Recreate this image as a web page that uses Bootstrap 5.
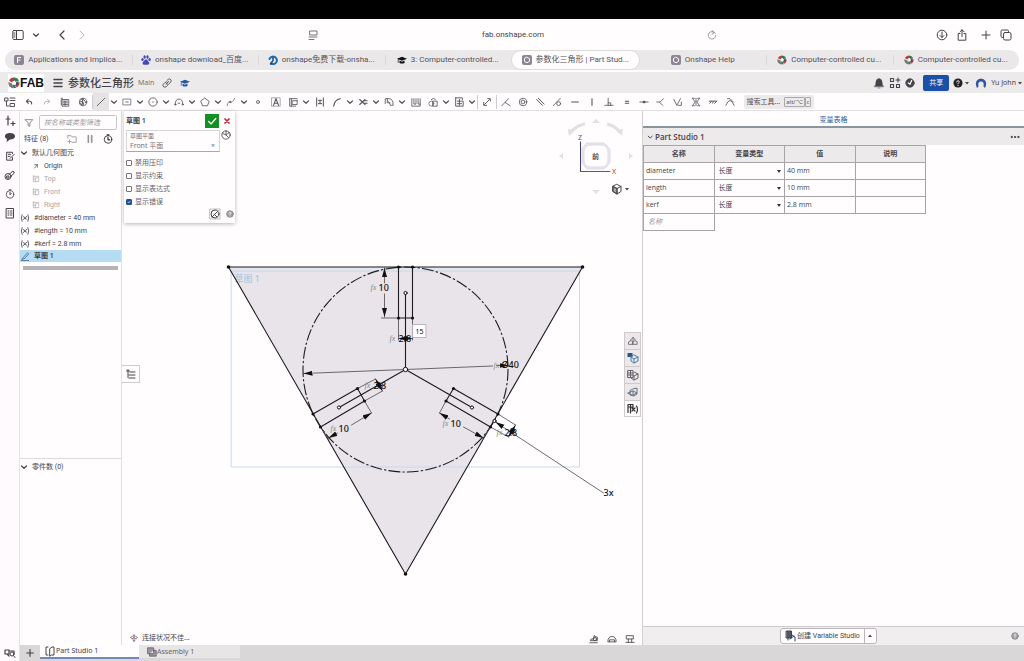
<!DOCTYPE html>
<html lang="zh-CN">
<head>
<meta charset="utf-8">
<meta name="viewport" content="width=device-width, initial-scale=1">
<title>参数化三角形 | Part Studio 1</title>
<link href="https://cdn.jsdelivr.net/npm/bootstrap@5.3.0/dist/css/bootstrap.min.css" rel="stylesheet">
<style>
:root{--ink:#454249;--chrome:#edeaec}
body{font-family:"Noto Sans","Noto Sans CJK SC",sans-serif;font-size:7px;line-height:10px;color:var(--ink);background:#fffdfe;min-height:100vh}
button{background:none;border:0;padding:0;color:inherit;line-height:inherit}
svg{display:block;fill:none;stroke:currentColor;stroke-linecap:round;stroke-linejoin:round;flex:none}
.ic{width:12px;height:12px}
.ic-s{width:10px;height:10px}
.ic-xs{width:8px;height:8px}
a{color:inherit;text-decoration:none}
.safari{font-family:Roboto,"Noto Sans CJK SC",sans-serif;font-size:8px;line-height:12px}
.topstrip{height:19px;background:#000}
.addressbar{height:31px}
.tabstrip{height:20px;background:#ebe8ea;border-radius:10px;margin:0 5px 2px}
.tabstrip a{flex:1 1 0;min-width:0;height:20px;color:#55525a}
.tabstrip a+a::before{content:"";position:absolute;left:0;top:5px;height:10px;border-left:1px solid #dad6d9}
.tabstrip a.current{background:#fffdfe;border-radius:10px;border:1px solid #dcd9db}
.tabstrip a.current::before,.tabstrip a.current+a::before{display:none}
.fav{width:10px;height:10px}
.docbar{height:21px;background:var(--chrome)}
.logo-box{background:#fff;height:18px;font:bold 12px/18px "Liberation Sans",sans-serif;color:#111}
.doc-title{font-size:11px;line-height:16px;font-weight:500}
.share{width:26px;height:16px;background:#1b50a8;color:#fff;border-radius:2px}
.tools{height:18px;border-bottom:1px solid #e3dfe2;color:#55525a}
.tools button{width:18px;height:17px;display:flex;align-items:center;justify-content:center}
.tools .first{width:20px}
.tools .wd{width:16px}
.tools .ch{width:10px}
.tools .on{background:#e6e3e5}
.vr-s{width:1px;height:14px;background:#cfcbce}
.relations{width:242px}
.relations button{width:17px}
.tools .search{width:70px;height:14px;background:#edeaec;border-radius:2px;margin-left:5px}
kbd.key{font:6px/8px "Noto Sans",sans-serif;color:#555;background:none;border:1px solid #aaa;padding:0 1px;border-radius:1px}
.rail{width:20px;background:#fffafd;border-right:1px solid #e6e3e5}
.features{width:102px;border-right:1px solid #e3e0e2;font-family:Roboto,"Noto Sans CJK SC",sans-serif}
.features .find{width:78px;height:15px;border:1px solid #c8c4c7;border-radius:2px;font-style:italic;font-size:7px;padding:0 4px;background:#fffdfe}
.find::placeholder,.newname::placeholder{color:#97939a;opacity:1}
.tree{padding-top:2px}
.node{height:13px}
.node.soft{color:#aaa6ab}
.node.sel{background:#b5dcf3;height:12px}
.rollbar{height:4px;background:#b6b2b5;margin:4px 3px 0}
.parts{border-top:1px solid #dedadd;height:187px}
.parts span{line-height:8px}
.sheet{min-width:0}
.dialog-box{left:2px;top:0;width:111px;height:112px;background:#fffdfe;box-shadow:0 1px 4px #b8b4b7;padding-left:2px}
.dialog-head{height:19px}
.okbtn{width:14px;height:14px;background:#139022!important;color:#fff}
.pick{border:1px solid #d8d4d7;border-bottom-color:#aaa6a9;height:22px;width:94px;padding-left:3px;color:#77737a}
.pick small{font-size:6px;display:block}
.tick{width:6px;height:6px;margin:0;border:1px solid #77737a;border-radius:1px;appearance:none}
.tick:checked{background:#1d4fa3 url("data:image/svg+xml,%3Csvg xmlns='http://www.w3.org/2000/svg' viewBox='0 0 6 6'%3E%3Cpath d='M1 3l1.5 1.5L5 1.5' stroke='white' fill='none'/%3E%3C/svg%3E");border-color:#1d4fa3}
.opts label{color:#66626a}
.opts>div{height:13px}
.opts{gap:0}
.gap-3px{gap:3px}
.listtab{left:0;top:254px;width:18px;height:18px;border:1px solid #cfccce;border-left:0;background:#fffdfe}
.cube{right:8px;top:6px;width:80px;height:82px}
.cubemenu{right:11px;top:72px}
.sidebtns{right:1px;top:221px;width:17px;border:1px solid #cfc9cc;color:#66626c}
.sidebtns button{height:17px;background:#ece8ea;border-bottom:1px solid #cfc9cc}
.sidebtns button:last-child{background:#fffdfe;border-bottom:0;height:15px;color:#333}
.status{left:8px;bottom:2px}
.measure{right:7px;bottom:1px}
.vars{width:382px;border-left:1px solid #d2ced1}
.vars-title{height:17px;border-bottom:2px solid #89979c;color:#2f5c99;padding-top:2px}
.vars-head{height:17px;background:var(--chrome);font-family:"Open Sans","Noto Sans CJK SC",sans-serif;font-size:8px;font-weight:600}
.vtable{width:283px;table-layout:fixed;border-collapse:collapse;font:7px/10px "Open Sans","Noto Sans CJK SC",sans-serif}
.vtable th,.vtable td{border:1px solid #a9a3a8;height:17px;padding:0 2px}
.vtable th{background:var(--chrome);text-align:center;font-weight:600}
.vtable select{appearance:none;border:0;width:100%;padding:0 2px;color:inherit;background:url("data:image/svg+xml,%3Csvg xmlns='http://www.w3.org/2000/svg' viewBox='0 0 4 3'%3E%3Cpath d='M0 0h4L2 3z' fill='%23333'/%3E%3C/svg%3E") right 1px center/4px 3px no-repeat}
.newname{width:100%;border:0;padding:0 2px;font-style:italic;background:none}
.vtable .blank{border:0}
.vars-foot{height:19px;background:#f0eeef;border-top:1px solid #cfcbce}
.vsbtn{height:16px;border:1px solid #b9b5b8;border-radius:3px;background:#fffdfe;font-family:Roboto,"Noto Sans CJK SC",sans-serif;font-weight:500}
.vsbtn button+button{width:12px;height:14px;border-left:1px solid #b9b5b8}
.bottom{height:16px;background:#dad7d9}
.bottom .plus{width:20px}
.bottom a{width:101px;height:13px}
.bottom a.current{background:#fffdfe;border-bottom:2px solid #7089b8;width:99px;height:14px}
.bottom a.idle{background:#e8e5e7;color:#66626a}
.center-bar{width:410px}
.geo text{font-family:"Noto Sans","Noto Sans CJK SC",sans-serif;stroke:none;fill:#111}
.geo .num{font-size:9px;font-weight:500}
.geo .fx{font-family:"Liberation Serif",serif;font-style:italic;font-size:8px;fill:#888}
</style>
</head>
<body class="d-flex flex-column">
<svg width="0" height="0" class="position-absolute" aria-hidden="true">
<defs>
<symbol id="chev" viewBox="0 0 8 8"><path d="M1.500 3 4 5.300 6.500 3" stroke-width="1.200"/></symbol>
<symbol id="caret" viewBox="0 0 8 8"><path d="M2 3h4L4 5.500z" fill="currentColor" stroke="none"/></symbol>
<symbol id="undo" viewBox="0 0 12 12"><path d="M5 2 2 5l3 3M2.500 5H7q3 0 3 4" stroke-width="1.600"/></symbol>
<symbol id="fablogo" viewBox="0 0 12 12"><g stroke="none"><path d="M6 .500a5.500 5.500 0 0 1 5 3L7.500 5 6 4z" fill="#2b7d55"/><path d="M1 3.500a5.500 5.500 0 0 1 5-3V4L4 5.500z" fill="#c53a35"/><path d="M.500 5 4 6.500 5.500 11.500A5.500 5.500 0 0 1 .500 5z" fill="#777"/><path d="M11.500 5a5.500 5.500 0 0 1-3 5.500L7 8z" fill="#c53a35"/><path d="M4.500 8 7 7.500 8 11H5.500z" fill="#2b7d55"/><path d="M4.500 4.500 7 3.500 8 6.500 6 8z" fill="#fff"/><path d="M8 5.500 10.500 4v3L8 8.500z" fill="#3c4a80"/></g></symbol>
<symbol id="cap" viewBox="0 0 12 12"><path d="M0 4.500 6 2l6 2.500L6 7z" fill="currentColor" stroke="none"/><path d="M3 6.500v3q3 1.500 6 0v-3L6 8z" fill="currentColor" stroke="none"/><path d="M1.500 5v4" stroke-width=".8"/></symbol>
<symbol id="osicon" viewBox="0 0 10 10"><rect width="10" height="10" rx="2" fill="#8b8595" stroke="none"/><path d="M5 2.300 7.500 3.700v2.700L5 7.800 2.500 6.400V3.700z" stroke="#fff"/></symbol>
<symbol id="plane" viewBox="0 0 12 12"><path d="M2 1v9h3M2 2h8v8H5V4h3M2 6h3"/></symbol>
<symbol id="q" viewBox="0 0 12 12"><circle cx="6" cy="6" r="4" fill="#a29ea4" stroke="#8a868c"/><path d="M4.800 5c0-1.700 2.500-1.700 2.500 0 0 .8-1.300.8-1.300 1.700M6 8.300v.1" stroke="#fff"/></symbol>
<symbol id="cub" viewBox="0 0 12 12"><path d="M6 1.500 10 3.500v5L6 11 2 8.500v-5zM2 3.500l4 2 4-2M6 5.500V11"/></symbol>
<symbol id="fvar" viewBox="0 0 12 12"><path d="M2.500 2Q.5 6 2.500 10M9.500 2Q11.500 6 9.500 10M4.200 4.200c1.500-1 2 4.500 3.600 3.400M8 4C6.500 4 5.500 8 4 7.800" stroke-width="1"/></symbol>
</defs>
</svg>

<div class="topstrip"></div>
<div class="safari">
  <div class="addressbar d-flex align-items-center justify-content-between px-2">
    <div class="d-flex align-items-center ps-1">
      <button aria-label="侧边栏"><svg class="ic" viewBox="0 0 12 12"><rect x=".8" y="1.500" width="10.400" height="9" rx="1"/><path d="M4.500 1.500v9M2 4h1M2 6h1M2 8h1"/></svg></button>
      <button class="ms-1 ps-1" aria-label="标签组"><svg class="ic-xs" viewBox="0 0 8 8"><use href="#chev"/></svg></button>
      <button class="ms-3" aria-label="后退"><svg class="ic" viewBox="0 0 12 12"><path d="M8 2 4 6 8 10" stroke-width="1.200"/></svg></button>
      <button class="ms-2" aria-label="前进" style="color:#bbb"><svg class="ic" viewBox="0 0 12 12"><path d="M4 2 8 6 4 10"/></svg></button>
    </div>
    <div class="center-bar d-flex align-items-center justify-content-between">
      <button aria-label="阅读器"><svg class="ic" viewBox="0 0 12 12" style="color:#777"><rect x="3" y="2" width="7" height="4"/><path d="M2 8h8M2 10.500h5"/></svg></button>
      <span>fab.onshape.com</span>
      <button aria-label="重新载入"><svg class="ic-s" viewBox="0 0 12 12" style="color:#888"><path d="M9.800 4A4.500 4.500 0 1 0 10.500 6.500M6 .500l3 2.500-3 2"/></svg></button>
    </div>
    <div class="d-flex align-items-center gap-2 pe-1">
      <button aria-label="下载"><svg class="ic" viewBox="0 0 12 12"><circle cx="6" cy="6" r="4.800"/><path d="M6 3v5.500M4 6.500l2 2 2-2"/></svg></button>
      <button aria-label="共享页面"><svg class="ic" viewBox="0 0 12 12"><path d="M4 4.500H2.200v6.700h7.600V4.500H8M6 7.500V.800M4 2.800l2-2 2 2"/></svg></button>
      <button class="ps-1" aria-label="新标签页"><svg class="ic" viewBox="0 0 12 12"><path d="M6 2v8M2 6h8"/></svg></button>
      <button aria-label="标签页概览"><svg class="ic" viewBox="0 0 12 12"><rect x="3.500" y="3.500" width="7.500" height="7.500" rx="1.500"/><path d="M3.500 8.500H2.200Q1 8.500 1 7.200v-5Q1 1 2.200 1h5Q8.500 1 8.500 2.200v1.300"/></svg></button>
    </div>
  </div>
  <nav class="tabstrip d-flex" aria-label="标签页">
    <a href="#" class="d-flex align-items-center justify-content-center gap-1 position-relative text-nowrap"><svg class="fav" viewBox="0 0 10 10"><rect width="10" height="10" rx="2" fill="#8b8595" stroke="none"/><path d="M3.500 7.500v-5h3M3.500 5h2.500" stroke="#fff"/></svg>Applications and Implica...</a>
    <a href="#" class="d-flex align-items-center justify-content-center gap-1 position-relative text-nowrap"><svg class="fav" viewBox="0 0 10 10"><g fill="#4448b8" stroke="none"><ellipse cx="1.500" cy="4.500" rx="1.200" ry="1.600"/><ellipse cx="3.600" cy="2" rx="1.200" ry="1.700"/><ellipse cx="6.500" cy="2" rx="1.200" ry="1.700"/><ellipse cx="8.600" cy="4.500" rx="1.200" ry="1.600"/><path d="M5 4.200Q6.300 4.200 7 6l1.500 2q-.5 2-2 1.700h-3q-1.500.3-2-1.500Q1.500 7 3 6q1-1.800 2-1.800"/></g></svg>onshape download_百度...</a>
    <a href="#" class="d-flex align-items-center justify-content-center gap-1 position-relative text-nowrap"><svg class="fav" viewBox="0 0 10 10"><path d="M3 8.500A3.800 3.800 0 1 0 1.500 4" stroke="#1769b5" stroke-width="2"/><path d="M5 2.500v3L2.500 9" stroke="#164a80" stroke-width="1.500"/></svg>onshape免费下载-onsha...</a>
    <a href="#" class="d-flex align-items-center justify-content-center gap-1 position-relative text-nowrap"><svg class="fav" viewBox="0 0 12 12" style="color:#111"><use href="#cap"/></svg>3: Computer-controlled...</a>
    <a href="#" class="current d-flex align-items-center justify-content-center gap-1 position-relative text-nowrap" aria-current="page"><svg class="fav" viewBox="0 0 10 10"><use href="#osicon"/></svg>参数化三角形 | Part Stud...</a>
    <a href="#" class="d-flex align-items-center justify-content-center gap-1 position-relative text-nowrap"><svg class="fav" viewBox="0 0 10 10"><use href="#osicon"/></svg>Onshape Help</a>
    <a href="#" class="d-flex align-items-center justify-content-center gap-1 position-relative text-nowrap"><svg class="fav" viewBox="0 0 12 12"><use href="#fablogo"/></svg>Computer-controlled cu...</a>
    <a href="#" class="d-flex align-items-center justify-content-center gap-1 position-relative text-nowrap"><svg class="fav" viewBox="0 0 12 12"><use href="#fablogo"/></svg>Computer-controlled cu...</a>
  </nav>
</div>

<header class="docbar d-flex align-items-center justify-content-between">
  <div class="d-flex align-items-center">
    <div class="logo-box d-flex align-items-center ms-2"><svg class="ic" viewBox="0 0 12 12"><use href="#fablogo"/></svg>FAB</div>
    <button class="ms-2" aria-label="菜单"><svg class="ic" viewBox="0 0 12 12"><path d="M2 2.500h8M2 6h8M2 9.500h8" stroke-width="1.500"/></svg></button>
    <span class="doc-title ms-1">参数化三角形</span>
    <span class="ms-1 text-secondary">Main</span>
    <button class="ms-2" aria-label="链接"><svg class="ic-s" viewBox="0 0 12 12"><path d="M5 7.500 8 4M6 3l1.500-1.500Q9.500.500 10.500 2t0 3L8 7.500Q6.500 8 5.500 7M6.500 5Q5 4 3.500 5.500l-2 2Q.500 9.500 2 10.500t3 0L6.500 9"/></svg></button>
    <button class="ms-1 ps-1" aria-label="教育版" style="color:#26569f"><svg class="ic-s" viewBox="0 0 12 12"><use href="#cap"/></svg></button>
  </div>
  <div class="d-flex align-items-center">
    <button aria-label="通知" class="me-1"><svg class="ic" viewBox="0 0 12 12"><path d="M1.500 9.500Q3 8 3 5q0-3 3-3.500Q9 2 9 5q0 3 1.500 4.500zM5 11h2" fill="currentColor" stroke-width=".5"/></svg></button>
    <button aria-label="应用" class="me-1"><svg class="ic" viewBox="0 0 12 12"><path d="M1.500 1.500h3v3h-3zM1.500 7.500h3v3h-3zM7.500 7.500h3v3h-3zM9 1v4M7 3h4" stroke-width="1.100"/></svg></button>
    <button aria-label="学习中心" class="me-1 pe-1"><svg class="ic-s" viewBox="0 0 12 12"><circle cx="6" cy="6" r="5" fill="currentColor"/><path d="M4 6 6 7.500 8 3" stroke="#fff" stroke-width="1.500"/></svg></button>
    <button class="share me-1">共享</button>
    <button class="d-flex align-items-center me-1 ms-0" aria-label="帮助"><svg class="ic-s" viewBox="0 0 12 12" style="color:#222"><circle cx="6" cy="6" r="5.500" fill="currentColor" stroke="none"/><path d="M4.500 4.700c0-2 3-2 3 0 0 1-1.500 1-1.500 2.300M6 9v.1" stroke="#fff" stroke-width="1.200"/></svg><svg class="ic-xs" viewBox="0 0 8 8"><use href="#caret"/></svg></button>
    <button class="d-flex align-items-center"><svg class="ic" viewBox="0 0 12 12"><path d="M2 11Q0 7 1.500 4 3 1.500 6 1.500T10.500 4Q12 7 10 11L8.500 9.500Q9.500 4.500 6 4.500T3.500 9.500z" fill="#2f56a5" stroke="none"/></svg><span class="ms-1">Yu John</span><svg class="ic-xs" viewBox="0 0 8 8"><use href="#caret"/></svg></button>
  </div>
</header>

<div class="tools d-flex align-items-center" role="toolbar" aria-label="草图工具">
  <button class="first" aria-label="特征列表"><svg class="ic" viewBox="0 0 12 12"><path d="M1 2h3v3H1zM2.500 5v5H5M6 2h5M6 4.500h5M6.500 7.500h4v3h-4z"/></svg></button>
  <button aria-label="撤消"><svg class="ic-xs" viewBox="0 0 12 12"><use href="#undo"/></svg></button>
  <button style="color:#aaa" aria-label="重做"><svg class="ic-xs" viewBox="0 0 12 12"><path d="m7 2 3 3-3 3M9.500 5H5Q2 5 2 9" stroke-width="1.300"/></svg></button>
  <button aria-label="复制"><svg class="ic-s" viewBox="0 0 12 12"><path d="M3 1.500H1.500v8M3 3h7.500v8H3zM4 5h5M4 7h5M4 9h5M6 5v5"/></svg></button>
  <button aria-label="更新"><svg class="ic-s" viewBox="0 0 12 12"><circle cx="6" cy="6" r="4.500"/><path d="M4 2.500Q9 3 9 7M3 5q4 0 4 4M2 7q2 0 2 2M6 1.500 5 10" stroke-width="1.200"/></svg></button>
  <span class="vr-s"></span>
  <button class="wd on" aria-label="直线"><svg class="ic-s" viewBox="0 0 12 12"><path d="M1.500 10.500 10.500 1.500"/></svg></button><button class="ch" aria-label="更多直线"><svg class="ic-xs"><use href="#chev"/></svg></button>
  <button class="wd" aria-label="矩形"><svg class="ic-s" viewBox="0 0 12 12"><rect x="1.500" y="2.500" width="9" height="7" stroke="#65718b"/><path d="M4.500 6h3"/></svg></button><button class="ch" aria-label="更多矩形"><svg class="ic-xs"><use href="#chev"/></svg></button>
  <button class="wd" aria-label="圆"><svg class="ic-s" viewBox="0 0 12 12"><circle cx="6" cy="6" r="5"/><path d="M5.500 6h1"/></svg></button><button class="ch" aria-label="更多圆"><svg class="ic-xs"><use href="#chev"/></svg></button>
  <button class="wd" aria-label="圆弧"><svg class="ic-s" viewBox="0 0 12 12"><path d="M1.500 8.500q0-6 4.500-6t4.500 6M5 7.500h2"/><circle cx="1.500" cy="9" r=".8"/><circle cx="10.500" cy="9" r=".8"/></svg></button><button class="ch" aria-label="更多圆弧"><svg class="ic-xs"><use href="#chev"/></svg></button>
  <button class="wd" aria-label="多边形"><svg class="ic-s" viewBox="0 0 12 12"><path d="m6 1.500 5 3.700-2 5.300H3L1 5.200z"/></svg></button><button class="ch" aria-label="更多多边形"><svg class="ic-xs"><use href="#chev"/></svg></button>
  <button class="wd" aria-label="样条"><svg class="ic-s" viewBox="0 0 12 12"><path d="M1.500 10.500Q2 4.500 5 6t5.500-4.500" stroke="#778"/><circle cx="5" cy="6" r=".8"/></svg></button><button class="ch" aria-label="更多样条"><svg class="ic-xs"><use href="#chev"/></svg></button>
  <button aria-label="点"><svg class="ic-s" viewBox="0 0 12 12"><circle cx="6" cy="6" r="1.800"/></svg></button>
  <button aria-label="文字"><svg class="ic-s" viewBox="0 0 12 12"><path d="M1 1h10v10H1z" stroke-width=".6"/><path d="m3 10 3-8 3 8M4 7.500h4" stroke-width="1.300"/></svg></button>
  <button class="wd" aria-label="转换"><svg class="ic-s" viewBox="0 0 12 12"><path d="M2 2h9M2 2v9h7M11 4v5H5V4.500h6M4 2v9"/></svg></button><button class="ch" aria-label="更多转换"><svg class="ic-xs"><use href="#chev"/></svg></button>
  <button aria-label="构造"><svg class="ic-s" viewBox="0 0 12 12"><path d="M2 1v10M10 1v10M4 4h4M4 8h4M6 4v4" stroke-width="1.200"/></svg></button>
  <button class="wd" aria-label="圆角"><svg class="ic-s" viewBox="0 0 12 12"><path d="M2 11Q3 3 10 2" stroke-width="1.300"/></svg></button><button class="ch" aria-label="更多圆角"><svg class="ic-xs"><use href="#chev"/></svg></button>
  <button class="wd" aria-label="修剪"><svg class="ic-s" viewBox="0 0 12 12"><path d="M2 3 8.500 9M8.500 3 2 9M8 4.500h3M8 7.500h3" stroke-width="1.300"/></svg></button><button class="ch" aria-label="更多修剪"><svg class="ic-xs"><use href="#chev"/></svg></button>
  <button class="wd" aria-label="偏移"><svg class="ic-s" viewBox="0 0 12 12"><path d="M1.500 8V2H6q5 0 5 8H7.500Q7.500 6 4.500 5M4 2v5h3"/></svg></button><button class="ch" aria-label="更多偏移"><svg class="ic-xs"><use href="#chev"/></svg></button>
  <button aria-label="阵列"><svg class="ic-s" viewBox="0 0 12 12"><path d="M1 2v9h10V2M3.500 2v6.500H6V2M8.500 2v6.500H11"/></svg></button>
  <button class="wd" aria-label="变换"><svg class="ic-s" viewBox="0 0 12 12"><circle cx="4" cy="8" r="3" stroke="#64718b"/><path d="M6 5h5v6H6zM4 3q3-3 5 0"/></svg></button><button class="ch" aria-label="更多变换"><svg class="ic-xs"><use href="#chev"/></svg></button>
  <button class="wd" aria-label="插入"><svg class="ic-s" viewBox="0 0 12 12"><path d="M2 1h8v2M2 1v10h9V5H4M4 8h5M6.500 3v7" stroke-width="1.100"/></svg></button><button class="ch" aria-label="更多插入"><svg class="ic-xs"><use href="#chev"/></svg></button>
  <span class="vr-s"></span>
  <button aria-label="尺寸"><svg class="ic-s" viewBox="0 0 12 12"><path d="M3 9 9 3M2 6.500V10h3.500M7 2h3v3" stroke-width="1.100"/></svg></button>
  <span class="vr-s"></span>
  <div class="relations d-flex justify-content-between">
    <button aria-label="重合"><svg class="ic-s" viewBox="0 0 12 12"><path d="M1 10.500 9 2M5 6.500l6 4"/></svg></button>
    <button aria-label="同心"><svg class="ic-s" viewBox="0 0 12 12" stroke="#476898"><circle cx="6" cy="6" r="4.500"/><circle cx="6" cy="6" r="2.300"/></svg></button>
    <button aria-label="平行"><svg class="ic-s" viewBox="0 0 12 12"><path d="m2 3 7 7M4 1.500l7 7" stroke-width="1.200"/></svg></button>
    <button aria-label="相切"><svg class="ic-s" viewBox="0 0 12 12"><path d="M1.500 10.500 10 1.500"/><circle cx="8" cy="8" r="2.300"/></svg></button>
    <button aria-label="水平"><svg class="ic-s" viewBox="0 0 12 12"><path d="M2 6h8" stroke-width="1.300"/></svg></button>
    <button aria-label="竖直"><svg class="ic-s" viewBox="0 0 12 12"><path d="M6 2v8" stroke-width="1.300"/></svg></button>
    <button aria-label="垂直"><svg class="ic-s" viewBox="0 0 12 12"><path d="M5 1.500V10M1 10h10M5 7h3v3"/></svg></button>
    <button aria-label="相等"><svg class="ic-s" viewBox="0 0 12 12"><path d="M4 5h4M4 7.500h4" stroke-width="1.300"/></svg></button>
    <button aria-label="中点"><svg class="ic-s" viewBox="0 0 12 12"><path d="M1 6h10"/><circle cx="6" cy="6" r="1.200" fill="currentColor"/></svg></button>
    <button aria-label="法向"><svg class="ic-s" viewBox="0 0 12 12"><path d="M9 2 4.500 6.500 8 10M1 6h3.500"/></svg></button>
    <button aria-label="穿透"><svg class="ic-s" viewBox="0 0 12 12"><path d="m1 3 3.500 7L9 2M6 10h4V6"/></svg></button>
    <button aria-label="对称"><svg class="ic-s" viewBox="0 0 12 12"><path d="M1.500 1.500H4M8 1.500h2.500M1.500 10.500H4M8 10.500h2.500M6 1.500v9M2 2l3 4-3 4M10 2 7 6l3 4"/></svg></button>
    <button aria-label="固定"><svg class="ic-s" viewBox="0 0 12 12"><path d="M1.500 5h9M2 7.500 4 5.500M5 7.500l2-2M8 7.500l2-2" stroke-width="1.200"/></svg></button>
    <button aria-label="曲率"><svg class="ic-s" viewBox="0 0 12 12"><path d="M1 10q5-12 10 0M3 2h3l4 4"/></svg></button>
  </div>
  <button class="search text-nowrap">搜索工具... <kbd class="key ms-1">alt/⌥</kbd><kbd class="key">c</kbd></button>
</div>

<main class="d-flex flex-grow-1">
  <nav class="rail d-flex flex-column align-items-center" aria-label="侧栏">
    <button class="my-1" aria-label="添加"><svg class="ic" viewBox="0 0 12 12"><path d="M4 1v9M2 4h4M7 8.500h4M9 6.500v4" stroke-width="1.200"/></svg></button>
    <button class="mb-2" aria-label="评论"><svg class="ic" viewBox="0 0 12 12"><path d="M6 2c7 0 6.500 6.500 0 6.500L2.500 11 3 8C-1 6 1 2 6 2" fill="currentColor" stroke="none"/></svg></button>
    <button class="mb-2" aria-label="笔记"><svg class="ic-s" viewBox="0 0 12 12"><path d="M9 8v3H2V1.500h7V3M4 4h3M4 6.500h2M6 9l5-5" stroke-width="1.200"/></svg></button>
    <button class="mb-2" aria-label="外观"><svg class="ic" viewBox="0 0 12 12"><circle cx="4" cy="7.500" r="3"/><path d="M5 5.500 9 2l1.500 2L7 7M3 7h2v2H3z"/></svg></button>
    <button class="mb-2" aria-label="历史记录"><svg class="ic-s" viewBox="0 0 12 12"><circle cx="6" cy="6.500" r="4.500"/><path d="M6 4v3l1.500-1.500M5 1h2" stroke-width="1.200"/></svg></button>
    <button aria-label="列表"><svg class="ic" viewBox="0 0 12 12"><path d="M2.500 1.500h7v9.500h-7zM4 4h1M4 6h1M4 8h1M6.500 4H8M6.500 6H8M6.500 8H8" stroke-width="1"/></svg></button>
  </nav>
  <aside class="features d-flex flex-column justify-content-between">
    <div>
      <div class="d-flex align-items-center justify-content-between ps-1 pe-1 pt-1">
        <svg class="ic-s" viewBox="0 0 12 12"><path d="M1.500 2h9L7 6v4L5 9V6z" stroke="#777"/></svg>
        <input class="find" aria-label="筛选特征" placeholder="按名称或类型筛选">
      </div>
      <div class="d-flex align-items-center justify-content-between pt-1 pe-2">
        <span class="text-nowrap ps-1">特征 (8)</span>
        <div class="d-flex gap-1" style="color:#99959a">
          <button aria-label="新文件夹"><svg class="ic-s" viewBox="0 0 12 12"><path d="M1 2h4l1 1.500h5V10H6M1 2v3M1 9h4M3 7v4"/></svg></button>
          <button class="ms-1" aria-label="暂停"><svg class="ic-s" viewBox="0 0 12 12"><path d="M4 2v8M8 2v8" stroke-width="2"/></svg></button>
          <button class="ms-1" aria-label="计时"><svg class="ic-s" viewBox="0 0 12 12" style="color:#222"><circle cx="6" cy="6.500" r="4.500"/><path d="M6 4v3h2M5 1h2" stroke-width="1.300"/></svg></button>
        </div>
      </div>
      <div class="tree">
        <div class="node d-flex align-items-center"><svg class="ic-xs me-1"><use href="#chev"/></svg>默认几何图元</div>
        <div class="ms-2 ps-1">
          <div class="node d-flex align-items-center gap-1"><svg class="ic-xs" viewBox="0 0 12 12"><path d="M4 4h4v4M8 4 4 9"/></svg>Origin</div>
          <div class="node soft d-flex align-items-center gap-1"><svg class="ic-xs"><use href="#plane"/></svg>Top</div>
          <div class="node soft d-flex align-items-center gap-1"><svg class="ic-xs"><use href="#plane"/></svg>Front</div>
          <div class="node soft d-flex align-items-center gap-1"><svg class="ic-xs"><use href="#plane"/></svg>Right</div>
        </div>
        <div class="node d-flex align-items-center"><svg class="ic-s me-1" viewBox="0 0 12 12"><use href="#fvar"/></svg>#diameter = 40 mm</div>
        <div class="node d-flex align-items-center"><svg class="ic-s me-1" viewBox="0 0 12 12"><use href="#fvar"/></svg>#length = 10 mm</div>
        <div class="node d-flex align-items-center"><svg class="ic-s me-1" viewBox="0 0 12 12"><use href="#fvar"/></svg>#kerf = 2.8 mm</div>
        <div class="node sel d-flex align-items-center fw-semibold"><svg class="ic-s me-1" viewBox="0 0 12 12" style="color:#456a96"><path d="M3 9 9 2l1.500 1.500L5 9.500 2.500 10zM1.500 11.500h9"/></svg>草图 1</div>
      </div>
      <div class="rollbar"></div>
    </div>
    <div class="parts d-flex align-items-start pt-1"><svg class="ic-xs me-1"><use href="#chev"/></svg><span>零件数 (0)</span></div>
  </aside>

  <section class="sheet position-relative flex-grow-1">
    <svg class="geo position-absolute w-100 h-100" viewBox="122 111 519 534" preserveAspectRatio="xMidYMid meet" role="img" aria-label="三角形草图">
      <defs>
        <marker id="ar" viewBox="0 0 9 6" refX="9" refY="3" markerWidth="9" markerHeight="6" markerUnits="userSpaceOnUse" orient="auto-start-reverse"><path d="M0 .500 9 3 0 5.500z" fill="#111" stroke="none"/></marker>
      </defs>
      <path d="M228 267H582L405 574z" fill="#e8e4e9" stroke="none"/>
      <rect x="231" y="271" width="348" height="196" stroke="#c3dcec"/>
      <text x="234" y="282" font-size="9" style="fill:#9fc4e0">草图 1</text>
      <g stroke="#1c1a1f" stroke-width="1.100">
        <path d="M228 267H582L405 574z"/>
        <circle cx="405" cy="369.500" r="102.500" stroke-dasharray="11 3 1.500 3"/>
        <path d="M398 267V318H412V267M405 293V369.500"/>
        <path d="M312.500 414 357 388.500 364 401 320 427M338.500 407.500 405 369.500"/>
        <path d="M497.500 414 453 388.500 445.500 401 490 427M471.500 407.500 405 369.500"/>
      </g>
      <g stroke="#4a474c" stroke-width=".8">
        <path d="M398 318V340M412 318V340M381 318H398M357 388.500 375 379M364 401 382 391M364 401 371 413M320 427 328 439M445.500 401 439 413M490 427 482 439M497.500 414 515 425M490 427 508 437"/>
        <path d="M384 283V268" marker-end="url(#ar)"/><path d="M384 294V317" marker-end="url(#ar)"/>
        <path d="M405 369.500 303 373.500" marker-end="url(#ar)"/><path d="M405 369.500 492 366"/><path d="M496 365.500H508" marker-end="url(#ar)"/>
        <path d="M351 425 371 413" marker-end="url(#ar)"/><path d="M337 433 328 438" marker-end="url(#ar)"/>
        <path d="M449 419 439 413" marker-end="url(#ar)"/><path d="M463 427 483 438" marker-end="url(#ar)"/>
        <path d="M603 493 495 422" marker-end="url(#ar)"/>
        <path d="M398 338.500H412" marker-start="url(#ar)" marker-end="url(#ar)"/>
        <path d="M375 379 382 391" marker-start="url(#ar)" marker-end="url(#ar)"/>
        <path d="M515 425 508 437" marker-start="url(#ar)" marker-end="url(#ar)"/>
      </g>
      <g fill="#111" stroke="none"><circle cx="228" cy="267" r="1.800"/><circle cx="582" cy="267" r="1.800"/><circle cx="405" cy="574" r="1.800"/><circle cx="398" cy="267" r="1.600"/><circle cx="412" cy="267" r="1.600"/><circle cx="398" cy="318" r="1.600"/><circle cx="412" cy="318" r="1.600"/><circle cx="312.500" cy="414" r="1.600"/><circle cx="357" cy="388.500" r="1.600"/><circle cx="364" cy="401" r="1.600"/><circle cx="320" cy="427" r="1.600"/><circle cx="497.500" cy="414" r="1.600"/><circle cx="453" cy="388.500" r="1.600"/><circle cx="445.500" cy="401" r="1.600"/><circle cx="490" cy="427" r="1.600"/></g>
      <g fill="#fff" stroke="#111"><circle cx="405" cy="293" r="1.600"/><circle cx="405" cy="369.500" r="2.200"/><circle cx="338.500" cy="407.500" r="1.600"/><circle cx="471.500" cy="407.500" r="1.600"/><circle cx="494" cy="421" r="1.600"/></g>
      <g class="num"><text x="378" y="291">10</text><text x="398" y="342">2.8</text><text x="373" y="389">2.8</text><text x="338" y="432">10</text><text x="450" y="427">10</text><text x="504" y="436">2.8</text><text x="501" y="368">Ø40</text><text x="603" y="496">3x</text></g>
      <g><text class="fx" x="370" y="290">fx</text><text class="fx" x="389" y="341">fx</text><text class="fx" x="364" y="388">fx</text><text class="fx" x="330" y="431">fx</text><text class="fx" x="442" y="426">fx</text><text class="fx" x="496" y="435">fx</text><text class="fx" x="493" y="368">fx</text></g>
      <rect x="412.500" y="324.500" width="13" height="13" fill="#fffdfe" stroke="#b9b6bb"/><text x="415" y="334" font-size="7">15</text>
    </svg>

    <div class="dialog-box position-absolute">
      <div class="dialog-head d-flex align-items-center justify-content-between">
        <b class="fw-semibold ps-0">草图 1</b>
        <div class="d-flex align-items-center gap-1 pe-1">
          <button class="okbtn d-flex align-items-center justify-content-center" aria-label="确定"><svg class="ic-s" viewBox="0 0 12 12"><path d="m2 6.500 3 3L10.500 3" stroke-width="1.600"/></svg></button>
          <button style="color:#c42034" aria-label="取消"><svg class="ic-xs" viewBox="0 0 12 12"><path d="m3 3 6 6M9 3 3 9" stroke-width="2.500"/></svg></button>
        </div>
      </div>
      <div class="d-flex justify-content-between pe-1">
        <div class="pick"><small>草图平面</small><div class="d-flex justify-content-between align-items-center">Front 平面<button class="pe-1" aria-label="清除">×</button></div></div>
        <svg class="ic-s" viewBox="0 0 12 12"><circle cx="6" cy="6" r="5"/><path d="M6 1v5l3 3M2 4l4 2M10 3 7 5"/></svg>
      </div>
      <div class="opts pt-1">
        <div class="d-flex align-items-center gap-3px"><input class="tick" type="checkbox" id="c1"><label for="c1">禁用压印</label></div>
        <div class="d-flex align-items-center gap-3px"><input class="tick" type="checkbox" id="c2"><label for="c2">显示约束</label></div>
        <div class="d-flex align-items-center gap-3px"><input class="tick" type="checkbox" id="c3"><label for="c3">显示表达式</label></div>
        <div class="d-flex align-items-center gap-3px"><input class="tick" type="checkbox" id="c4" checked><label for="c4">显示错误</label></div>
      </div>
      <div class="d-flex justify-content-end align-items-center gap-1">
        <svg class="ic" viewBox="0 0 12 12"><path d="M1 1h10v10H1z" stroke="#999" stroke-width=".6"/><circle cx="6" cy="6" r="4"/><path d="m3 9 6-6M5 6l3 3"/></svg>
        <button aria-label="草图帮助"><svg class="ic-s" viewBox="0 0 12 12"><use href="#q"/></svg></button>
      </div>
    </div>

    <button class="listtab position-absolute d-flex align-items-center justify-content-center" aria-label="显示列表"><svg class="ic" viewBox="0 0 12 12"><path d="M3 1.500v8M1.500 3h3M5 4h5M4 7h6M4 10h6"/></svg></button>

    <svg class="cube position-absolute" viewBox="553 117 80 82" role="img" aria-label="视图方向：前">
      <g stroke="#e3e0e3" stroke-width="3" stroke-linecap="butt"><path d="M570 132q6-7 14-8M606 124q8 2 13 8"/></g>
      <g fill="#e3e0e3" stroke="none"><path d="m595 119 4 4h-8zM562 153v6l-4-3zM628 153v6l4-3zM595 194l4-4h-8zM567 129l7 1-6 6zM622 129l-7 1 6 6z"/></g>
      <path d="M586 143h17l6 6v14l-6 6h-17l-5-6v-14z" fill="#ebe8f0" stroke="#ddd9e4"/><rect x="583" y="145" width="24" height="22" rx="6" fill="#fffdfe" stroke="#ddd9e4"/>
      <path d="M579.500 142V171.500" stroke="#3c3d7a"/><path d="M579.500 171.500H609" stroke="#a33d43"/>
      <g stroke="none" font-size="7"><text x="577" y="140" fill="#555891">Z</text><text x="611" y="174" fill="#b03038">X</text><text x="591" y="159" font-size="7" font-weight="500" fill="#222">前</text></g>
    </svg>
    <button class="cubemenu position-absolute d-flex align-items-center" aria-label="视图选项"><svg class="ic" viewBox="0 0 12 12"><path d="M2 3.500 6 5.500V11L2 8.500z" fill="#aaa"/><use href="#cub"/></svg><svg class="ic-xs" viewBox="0 0 8 8"><use href="#caret"/></svg></button>

    <div class="sidebtns position-absolute d-flex flex-column">
      <button class="d-flex align-items-center justify-content-center" aria-label="配置"><svg class="ic-s" viewBox="0 0 12 12"><path d="M3 5 6 1.500 9 5M6 2v4M1 7l2.500-1.500L6 7v3H1zM6 7l2.500-1.500L11 7v3H6z"/></svg></button>
      <button class="d-flex align-items-center justify-content-center" aria-label="外观面板"><svg class="ic" viewBox="0 0 12 12"><rect x=".5" y="1" width="5" height="4" fill="#2a5685" stroke="none"/><path d="m7 3 4 2v4l-4 2-3-2V5zM4 5l3 2 4-2M7 7v4" stroke="#477fae"/></svg></button>
      <button class="d-flex align-items-center justify-content-center" aria-label="自定义表格"><svg class="ic" viewBox="0 0 12 12"><path d="M1 1.500h5v7H1zM1 4h5M1 6h5M3.500 2v6M7 3l4 2v4l-4 2-3-2M7 7l4-2M7 7v4"/></svg></button>
      <button class="d-flex align-items-center justify-content-center" aria-label="显示状态"><svg class="ic" viewBox="0 0 12 12" style="color:#697086"><path d="M6 3 10 2v6L7 10 3 9V5zM1 7l5-2 4 2-4 2zM6 5v4"/></svg></button>
      <button class="d-flex align-items-center justify-content-center" aria-label="变量"><svg class="ic" viewBox="0 0 12 12"><path d="M1 1.500h5v5M1 1.500v8M1 4h5M3.500 2v8M5 8l3-3M5 5l3 3M9.500 3q2 3 0 7" stroke-width="1.200"/></svg></button>
    </div>
    <div class="status position-absolute d-flex align-items-center gap-1"><svg class="ic-xs" viewBox="0 0 12 12" style="color:#684a49"><path d="M1 5q5-5 10 0M3 7q3-3 6 0M6 1v10M4 9l2 2 2-2M1 5l2 2M11 5 9 7"/></svg><span>连接状况不佳...</span></div>
    <div class="measure position-absolute d-flex gap-2">
      <button aria-label="质量属性"><svg class="ic-s" viewBox="0 0 12 12"><path d="M1 10.500h9M2 8h8V4L6 2v4H3z"/><circle cx="7" cy="6" r="2"/></svg></button>
      <button aria-label="性能"><svg class="ic-s" viewBox="0 0 12 12"><path d="M1 9q0-6 5-6t5 6zM3 9V7h6v2"/></svg></button>
      <button aria-label="测量"><svg class="ic-s" viewBox="0 0 12 12"><path d="M2 2h8v4H2zM1 10h10M4 6v4M8 6v4"/></svg></button>
    </div>
  </section>

  <aside class="vars d-flex flex-column">
    <div class="vars-title d-flex align-items-center justify-content-center">变量表格</div>
    <div class="vars-head d-flex align-items-center justify-content-between ps-0 pe-1"><span class="d-flex align-items-center ms-1"><svg class="ic-xs" viewBox="0 0 10 8"><use href="#chev" width="8" height="8"/></svg>Part Studio 1</span><button aria-label="更多"><svg class="ic-s" viewBox="0 0 12 12"><g fill="currentColor"><circle cx="2" cy="6" r=".8"/><circle cx="6" cy="6" r=".8"/><circle cx="10" cy="6" r=".8"/></g></svg></button></div>
    <table class="vtable">
      <thead><tr><th>名称</th><th>变量类型</th><th>值</th><th>说明</th></tr></thead>
      <tbody>
        <tr><td>diameter</td><td><select aria-label="diameter 类型"><option>长度</option></select></td><td>40 mm</td><td></td></tr>
        <tr><td>length</td><td><select aria-label="length 类型"><option>长度</option></select></td><td>10 mm</td><td></td></tr>
        <tr><td>kerf</td><td><select aria-label="kerf 类型"><option>长度</option></select></td><td>2.8 mm</td><td></td></tr>
        <tr><td><input class="newname" aria-label="新变量名称" placeholder="名称"></td><td class="blank" colspan="3"></td></tr>
      </tbody>
    </table>
    <div class="vars-foot mt-auto d-flex align-items-center justify-content-between ps-1 pe-1">
      <span></span>
      <div class="vsbtn d-flex align-items-center"><button class="d-flex align-items-center ps-1 pe-1 text-nowrap"><svg class="ic" viewBox="0 0 12 12"><path d="M1.500 1h5v7h-5z" fill="#556"/><path d="M3 8v2M7 5l3 2v4M5 9l4-3" stroke="#24456f"/></svg>创建 Variable Studio</button><button class="d-flex align-items-center justify-content-center" aria-label="更多创建选项"><svg class="ic-xs" viewBox="0 0 8 8"><path d="M2 5h4L4 2.500z" fill="currentColor" stroke="none"/></svg></button></div>
      <button aria-label="表格帮助"><svg class="ic-s" viewBox="0 0 12 12"><use href="#q"/></svg></button>
    </div>
  </aside>
</main>

<footer class="bottom d-flex">
  <div class="rail d-flex align-items-center justify-content-center"><button aria-label="标签管理器"><svg class="ic" viewBox="0 0 12 12"><path d="M1 3h4v4H1zM5 4h5v3M3 7l2 2" stroke-width="1.200"/><circle cx="8" cy="7" r="2"/><path d="m9.500 8.500 1.500 2"/></svg></button></div>
  <button class="plus d-flex align-items-center justify-content-center" aria-label="新建标签"><svg class="ic-s" viewBox="0 0 12 12"><path d="M6 2v8M2 6h8" stroke-width="1.400"/></svg></button>
  <a class="current d-flex align-items-center ps-1" href="#"><svg class="ic" viewBox="0 0 12 12"><path d="M4 2H2v8h2M6 3.500 8 2h2v8H7.500L6 11z"/></svg>Part Studio 1</a>
  <a class="idle d-flex align-items-center ps-2" href="#"><svg class="ic-s" viewBox="0 0 12 12"><path d="M1 1h7v7H1zM3 8v3h8V4H8" fill="#99959b"/></svg>Assembly 1</a>
</footer>
<script src="https://cdn.jsdelivr.net/npm/bootstrap@5.3.0/dist/js/bootstrap.bundle.min.js"></script>
</body>
</html>
